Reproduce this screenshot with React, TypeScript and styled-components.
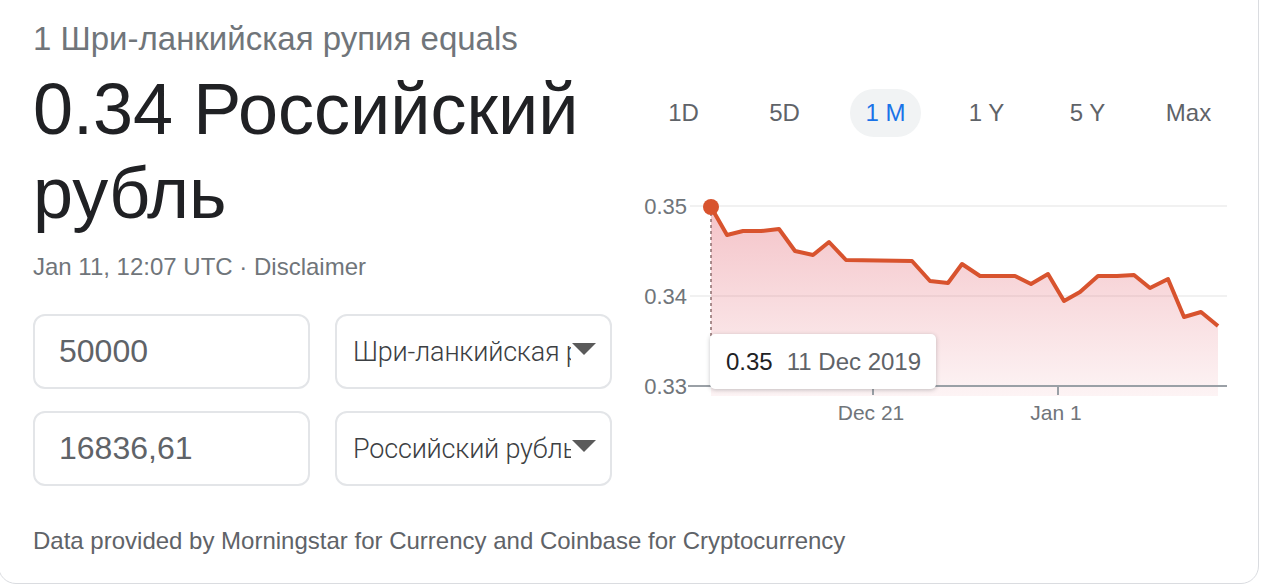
import React from "react";
import styled, { createGlobalStyle } from "styled-components";

const Global = createGlobalStyle`
  html, body { margin: 0; padding: 0; background: #fff; overflow: hidden; }
  body { font-family: "Liberation Sans", Arial, sans-serif; }
`;

const Card = styled.div`
  box-sizing: border-box;
  margin: -20px 0 0 -2px;
  width: 1261px;
  height: 604px;
  border: 1.5px solid #dadce0;
  border-radius: 18px;
  background: #fff;
  padding: 20px 0 0 34px;
  display: flex;
  flex-direction: column;
`;

const Row = styled.div`
  display: flex;
`;

const LeftCol = styled.div`
  width: 597px;
  display: flex;
  flex-direction: column;
`;

const Subtitle = styled.div`
  margin-top: 18px;
  font-size: 33px;
  line-height: 40px;
  color: #70757a;
`;

const Heading = styled.div`
  margin-top: 8px;
  font-size: 72px;
  line-height: 84px;
  color: #202124;
`;

const DateLine = styled.div`
  margin-top: 17px;
  font-size: 24px;
  line-height: 30px;
  color: #70757a;
`;

const InputGrid = styled.div`
  margin-top: 32px;
  display: grid;
  grid-template-columns: 277px 277px;
  column-gap: 25px;
  row-gap: 22px;
`;

const Box = styled.div<{ $select?: boolean }>`
  box-sizing: border-box;
  height: 75px;
  border: 2px solid #e3e5e8;
  border-radius: 12px;
  display: flex;
  align-items: center;
  padding: ${(p) => (p.$select ? "0 14px 0 16px" : "0 0 0 24px")};
  overflow: hidden;
`;

const Amount = styled.span`
  font-size: 32px;
  color: #5f6368;
`;

const SelectText = styled.span`
  font-family: Roboto, "Liberation Sans", sans-serif;
  font-weight: 300;
  font-size: 27px;
  color: #3c4043;
  white-space: nowrap;
  overflow: hidden;
  width: 218px;
  letter-spacing: -0.2px;
`;

const Caret = styled.span`
  width: 0;
  height: 0;
  border-left: 12px solid transparent;
  border-right: 12px solid transparent;
  border-top: 12px solid #5a5a5a;
  margin-left: auto;
  margin-top: -6px;
`;

const RightCol = styled.div`
  flex: 1;
  display: flex;
  flex-direction: column;
`;

const Tabs = styled.div`
  margin-top: 88px;
  margin-left: 3px;
  display: flex;
`;

const Tab = styled.div`
  width: 101px;
  display: flex;
  justify-content: center;
`;

const TabPill = styled.span<{ $active?: boolean }>`
  height: 48px;
  padding: 0 ${(p) => (p.$active ? "15px" : "0")};
  border-radius: 24px;
  background: ${(p) => (p.$active ? "#f1f3f4" : "transparent")};
  color: ${(p) => (p.$active ? "#1a73e8" : "#5f6368")};
  font-size: 24px;
  line-height: 48px;
`;

const ChartWrap = styled.div`
  position: relative;
  margin-top: 54px;
  width: 610px;
  height: 240px;
`;

const Tooltip = styled.div`
  position: absolute;
  left: 80px;
  top: 143px;
  width: 226px;
  height: 55px;
  box-sizing: border-box;
  background: #fff;
  border-radius: 5px;
  box-shadow: 0 1px 4px rgba(60, 64, 67, 0.3);
  display: flex;
  align-items: center;
  padding-left: 16px;
  gap: 14px;
  font-size: 24px;
`;

const TipValue = styled.span`
  color: #202124;
`;

const TipDate = styled.span`
  color: #5f6368;
`;

const Footer = styled.div`
  margin-top: 40px;
  font-size: 24px;
  line-height: 30px;
  color: #5f6368;
`;

const pts: [number, number][] = [
  [711, 206], [727, 234], [743, 230], [761, 230], [779, 228], [795, 250],
  [813, 254], [829, 241], [846, 259], [912, 260], [930, 280], [948, 282],
  [962, 263], [980, 275], [1015, 275], [1031, 283], [1048, 273], [1064, 300],
  [1080, 291], [1098, 275], [1117, 275], [1134, 274], [1150, 287], [1168, 278],
  [1184, 316], [1201, 311], [1218, 325],
];

const Chart = () => {
  const p = pts.map(([x, y]) => [x - 630, y - 190]);
  const line = p.map(([x, y], i) => `${i ? "L" : "M"}${x} ${y}`).join(" ");
  const area = `${line} L${p[p.length - 1][0]} 205 L${p[0][0]} 205 Z`;
  return (
    <svg width="610" height="240" viewBox="0 0 610 240">
      <defs>
        <linearGradient id="fill" x1="0" y1="0" x2="0" y2="1">
          <stop offset="0" stopColor="#e5707c" stopOpacity="0.42" />
          <stop offset="1" stopColor="#e5707c" stopOpacity="0.08" />
        </linearGradient>
      </defs>
      <g fontFamily="Liberation Sans, Arial, sans-serif" fontSize="22" fill="#70757a">
        <text x="57" y="23" textAnchor="end">0.35</text>
        <text x="57" y="113" textAnchor="end">0.34</text>
        <text x="57" y="203" textAnchor="end">0.33</text>
      </g>
      <g fontFamily="Liberation Sans, Arial, sans-serif" fontSize="21" fill="#70757a">
        <text x="241" y="229" textAnchor="middle">Dec 21</text>
        <text x="426" y="229" textAnchor="middle">Jan 1</text>
      </g>
      <line x1="60" y1="15" x2="597" y2="15" stroke="#ececec" strokeWidth="1.5" />
      <line x1="60" y1="105" x2="597" y2="105" stroke="#ececec" strokeWidth="1.5" />
      <path d={area} fill="url(#fill)" />
      <line x1="58" y1="195" x2="597" y2="195" stroke="#9aa0a6" strokeWidth="2" />
      <line x1="243" y1="195" x2="243" y2="204" stroke="#9aa0a6" strokeWidth="2" />
      <line x1="428" y1="195" x2="428" y2="204" stroke="#9aa0a6" strokeWidth="2" />
      <line x1="81" y1="16" x2="81" y2="195" stroke="#8d6e6e" strokeWidth="1.5" strokeDasharray="3 3" />
      <path d={line} fill="none" stroke="#d8532e" strokeWidth="4" strokeLinejoin="round" />
      <circle cx="81" cy="16" r="8" fill="#d8532e" />
    </svg>
  );
};

export default function App() {
  const tabs = ["1D", "5D", "1 M", "1 Y", "5 Y", "Max"];
  return (
    <>
      <Global />
      <Card>
        <Row>
          <LeftCol>
            <Subtitle>1 Шри-ланкийская рупия equals</Subtitle>
            <Heading>
              0.34 Российский
              <br />
              рубль
            </Heading>
            <DateLine>Jan 11, 12:07 UTC · Disclaimer</DateLine>
            <InputGrid>
              <Box>
                <Amount>50000</Amount>
              </Box>
              <Box $select>
                <SelectText>Шри-ланкийская рупия</SelectText>
                <Caret />
              </Box>
              <Box>
                <Amount>16836,61</Amount>
              </Box>
              <Box $select>
                <SelectText>Российский рубль</SelectText>
                <Caret />
              </Box>
            </InputGrid>
          </LeftCol>
          <RightCol>
            <Tabs>
              {tabs.map((t) => (
                <Tab key={t}>
                  <TabPill $active={t === "1 M"}>{t}</TabPill>
                </Tab>
              ))}
            </Tabs>
            <ChartWrap>
              <Chart />
              <Tooltip>
                <TipValue>0.35</TipValue>
                <TipDate>11 Dec 2019</TipDate>
              </Tooltip>
            </ChartWrap>
          </RightCol>
        </Row>
        <Footer>Data provided by Morningstar for Currency and Coinbase for Cryptocurrency</Footer>
      </Card>
    </>
  );
}
